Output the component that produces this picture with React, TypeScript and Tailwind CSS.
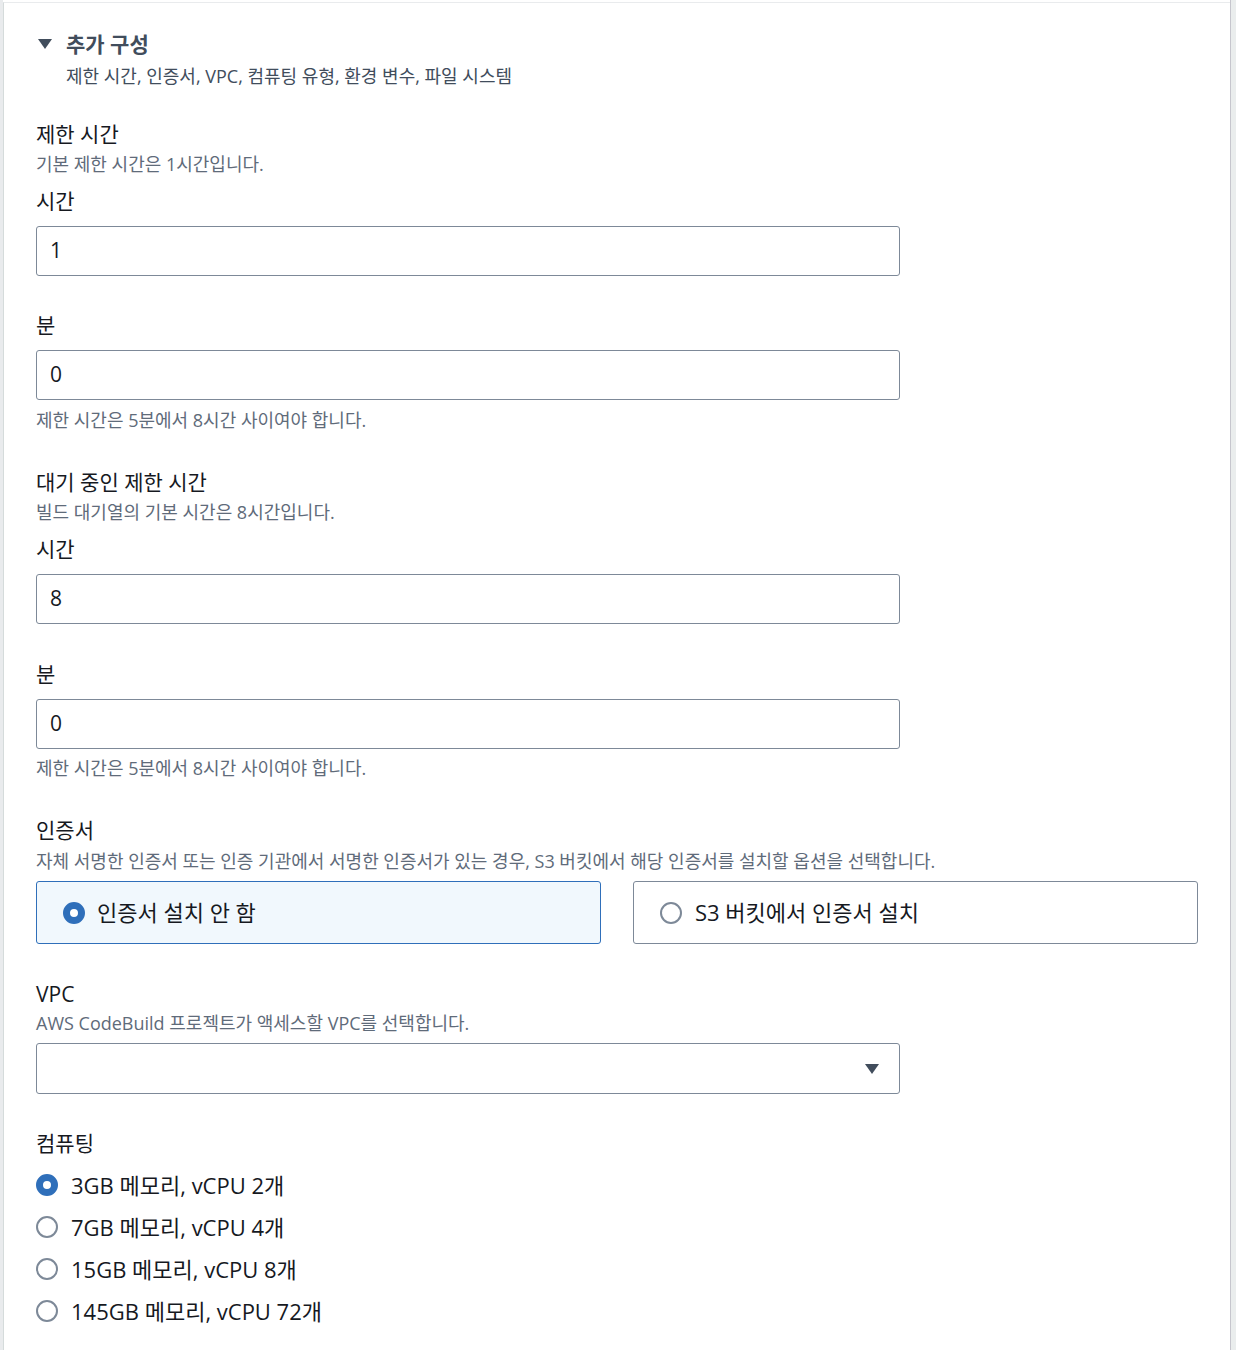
import React from "react";

function Label({ children, className = "" }: { children: React.ReactNode; className?: string }) {
  return <p className={`text-[21px] leading-[28px] text-[#16191f] ${className}`}>{children}</p>;
}

function Desc({ children, className = "" }: { children: React.ReactNode; className?: string }) {
  return <p className={`text-[18px] leading-[24px] text-[#5f6b7a] ${className}`}>{children}</p>;
}

function TextInput({ value, className = "" }: { value: string; className?: string }) {
  return (
    <div
      className={`w-[864px] h-[50px] border border-[#7d8998] rounded-[3px] bg-white flex items-center px-[13px] text-[21px] text-[#16191f] ${className}`}
    >
      {value}
    </div>
  );
}

function Radio({ checked }: { checked: boolean }) {
  return checked ? (
    <span className="w-[22px] h-[22px] rounded-full border-[7px] border-[#2f6fba] bg-white shrink-0" />
  ) : (
    <span className="w-[22px] h-[22px] rounded-full border-2 border-[#7d8998] bg-white shrink-0" />
  );
}

export default function App() {
  const computeOptions = [
    "3GB 메모리, vCPU 2개",
    "7GB 메모리, vCPU 4개",
    "15GB 메모리, vCPU 8개",
    "145GB 메모리, vCPU 72개",
  ];

  return (
    <div
      className="flex min-h-[1350px] bg-white"
      style={{ fontFamily: '"Open Sans", "Noto Sans CJK KR", sans-serif' }}
    >
      <div className="w-[3px] bg-[#e9ebed] shrink-0" />
      <div className="w-[1227px] mt-[2px] border-t border-[#e9ebed] border-l border-l-[#d5dbdb] pl-[32px] pt-[27px] pb-[20px]">
        <div className="flex items-center h-[28px]">
          <svg width="16" height="12" viewBox="0 0 16 12" className="ml-[1px]">
            <path d="M1 1 L15 1 L8 11 Z" fill="#414d5c" />
          </svg>
          <span className="ml-[13px] text-[21px] font-bold text-[#414d5c] leading-[28px]">추가 구성</span>
        </div>
        <p className="ml-[30px] mt-[6px] text-[18px] leading-[24px] text-[#414d5c]">
          제한 시간, 인증서, VPC, 컴퓨팅 유형, 환경 변수, 파일 시스템
        </p>

        <Label className="mt-[32px]">제한 시간</Label>
        <Desc className="mt-[4px]">기본 제한 시간은 1시간입니다.</Desc>
        <Label className="mt-[11px]">시간</Label>
        <TextInput value="1" className="mt-[11px]" />
        <Label className="mt-[35px]">분</Label>
        <TextInput value="0" className="mt-[11px]" />
        <Desc className="mt-[8px]">제한 시간은 5분에서 8시간 사이여야 합니다.</Desc>

        <Label className="mt-[36px]">대기 중인 제한 시간</Label>
        <Desc className="mt-[4px]">빌드 대기열의 기본 시간은 8시간입니다.</Desc>
        <Label className="mt-[11px]">시간</Label>
        <TextInput value="8" className="mt-[11px]" />
        <Label className="mt-[36px]">분</Label>
        <TextInput value="0" className="mt-[11px]" />
        <Desc className="mt-[7px]">제한 시간은 5분에서 8시간 사이여야 합니다.</Desc>

        <Label className="mt-[36px]">인증서</Label>
        <Desc className="mt-[5px]">
          자체 서명한 인증서 또는 인증 기관에서 서명한 인증서가 있는 경우, S3 버킷에서 해당 인증서를 설치할 옵션을 선택합니다.
        </Desc>
        <div className="mt-[8px] flex gap-[32px] w-[1162px]">
          <div className="flex-1 h-[63px] border border-[#2f6fba] bg-[#f1f8fd] rounded-[3px] flex items-center pl-[26px] gap-[12px]">
            <Radio checked />
            <span className="text-[22px] text-[#16191f]">인증서 설치 안 함</span>
          </div>
          <div className="flex-1 h-[63px] border border-[#7d8998] bg-white rounded-[3px] flex items-center pl-[26px] gap-[13px]">
            <Radio checked={false} />
            <span className="text-[22px] text-[#16191f]">S3 버킷에서 인증서 설치</span>
          </div>
        </div>

        <Label className="mt-[36px]">VPC</Label>
        <Desc className="mt-[3px]">AWS CodeBuild 프로젝트가 액세스할 VPC를 선택합니다.</Desc>
        <div className="mt-[8px] w-[864px] h-[51px] border border-[#7d8998] rounded-[3px] bg-white flex items-center justify-end pr-[19px]">
          <svg width="16" height="12" viewBox="0 0 16 12">
            <path d="M1 1 L15 1 L8 11 Z" fill="#414d5c" />
          </svg>
        </div>

        <Label className="mt-[35px]">컴퓨팅</Label>
        <div className="mt-[13px] flex flex-col gap-[12px]">
          {computeOptions.map((opt, i) => (
            <div key={opt} className="flex items-center h-[30px] gap-[13px]">
              <Radio checked={i === 0} />
              <span className="text-[22px] text-[#16191f] leading-[30px]">{opt}</span>
            </div>
          ))}
        </div>
      </div>
      <div className="w-px bg-[#c6c6cd] shrink-0" />
      <div className="flex-1 bg-[#eaeded]" />
    </div>
  );
}
